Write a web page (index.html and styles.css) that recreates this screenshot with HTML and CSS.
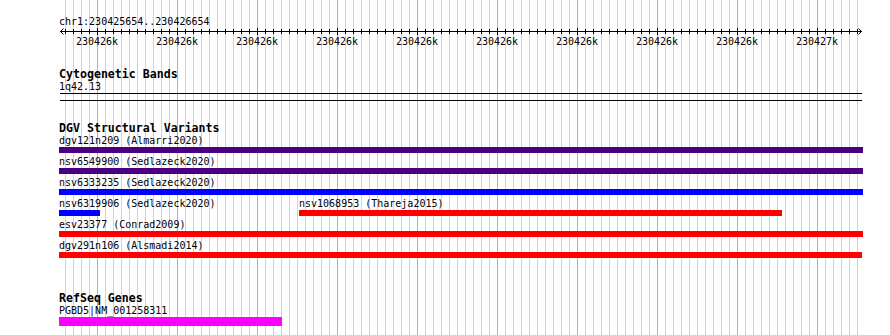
FILE: index.html
```html
<!doctype html>
<html lang="en-us">
  <head>
    <meta charset="utf-8">
    <meta name="viewport" content="width=device-width, initial-scale=1.0">
    <title>chr1:230425654..230426654</title>
    <link rel="stylesheet" href="styles.css">
  </head>
  <body>
    <div class="browser">
      <div class="panel">
        <div class="ruler">
          <div class="landmark">chr1:230425654..230426654</div>
          <svg class="axis" width="804" height="8" viewBox="0 0 804 8" shape-rendering="crispEdges">
            <defs>
              <pattern id="minor-tick" x="6" y="0" width="8" height="8" patternUnits="userSpaceOnUse">
                <rect x="0" y="1" width="1" height="5"/>
              </pattern>
              <pattern id="major-tick" x="38" y="0" width="80" height="8" patternUnits="userSpaceOnUse">
                <rect x="0" y="0" width="1" height="7"/>
              </pattern>
            </defs>
            <rect x="6" y="0" width="793" height="8" fill="url(#minor-tick)"/>
            <rect x="38" y="0" width="721" height="8" fill="url(#major-tick)"/>
            <rect x="1" y="3" width="802" height="1"/>
            <path d="M4.5 0.5 L1.5 3.5 L4.5 6.5 M799.5 0.5 L802.5 3.5 L799.5 6.5" fill="none" stroke="#000" stroke-width="1" shape-rendering="auto"/>
          </svg>
          <div class="ticks">
            <span>230426k</span>
            <span>230426k</span>
            <span>230426k</span>
            <span>230426k</span>
            <span>230426k</span>
            <span>230426k</span>
            <span>230426k</span>
            <span>230426k</span>
            <span>230426k</span>
            <span>230427k</span>
          </div>
        </div>

        <section class="track cytobands">
          <div class="track-title">Cytogenetic Bands</div>
          <div class="name">1q42.13</div>
          <div class="band"></div>
        </section>

        <section class="track dgv">
          <div class="track-title">DGV Structural Variants</div>
          <div class="row">
            <div class="feature" style="margin-left:0;width:804px">
              <div class="name">dgv121n209 (Almarri2020)</div>
              <div class="bar indigo"></div>
            </div>
          </div>
          <div class="row">
            <div class="feature" style="margin-left:0;width:804px">
              <div class="name">nsv6549900 (Sedlazeck2020)</div>
              <div class="bar indigo"></div>
            </div>
          </div>
          <div class="row">
            <div class="feature" style="margin-left:0;width:804px">
              <div class="name">nsv6333235 (Sedlazeck2020)</div>
              <div class="bar blue"></div>
            </div>
          </div>
          <div class="row">
            <div class="feature" style="margin-left:0;width:41px">
              <div class="name">nsv6319906 (Sedlazeck2020)</div>
              <div class="bar blue"></div>
            </div>
            <div class="feature" style="margin-left:240px;width:483px">
              <div class="name">nsv1068953 (Thareja2015)</div>
              <div class="bar red"></div>
            </div>
          </div>
          <div class="row">
            <div class="feature" style="margin-left:0;width:804px">
              <div class="name">esv23377 (Conrad2009)</div>
              <div class="bar red"></div>
            </div>
          </div>
          <div class="row">
            <div class="feature" style="margin-left:0;width:803px">
              <div class="name">dgv291n106 (Alsmadi2014)</div>
              <div class="bar red"></div>
            </div>
          </div>
        </section>

        <section class="track refseq">
          <div class="track-title">RefSeq Genes</div>
          <div class="row">
            <div class="feature" style="margin-left:0;width:223px">
              <div class="name">PGBD5|NM_001258311</div>
              <div class="bar gene"></div>
            </div>
          </div>
        </section>
      </div>
    </div>
  </body>
</html>
```

FILE: styles.css
```css
* {
  box-sizing: border-box;
}

body {
  margin: 0;
  background: #fff;
}

/* the grid box spans the first to the last 10bp line (x 65..857) */
.browser {
  width: 793px;
  height: 335px;
  margin-left: 65px;
  padding-top: 16px;

  font-family: "DejaVu Sans Mono", monospace;
  font-size: 10px;
  line-height: 12px;
  color: #000;

  background-color: #fff;
  background-image:
    linear-gradient(90deg, #7cc2ee 0 1px, rgba(124, 194, 238, 0) 1px),
    linear-gradient(90deg, #a0e6ee 0 1px, rgba(160, 230, 238, 0) 1px);
  background-position: 32px 0, 0 0;
  background-size: 80px 100%, 8px 100%;
  background-repeat: repeat-x;
}

/* tracks start at x 59 */
.panel {
  width: 804px;
  margin-left: -6px;
}

.axis {
  display: block;
}

.ticks {
  display: flex;
  margin-left: -2px;
}

.ticks span {
  flex: none;
  width: 80px;
  text-align: center;
}

.track-title {
  font-weight: bold;
  font-size: 11.6px;
  line-height: 13px;
}

.name {
  white-space: nowrap;
}

.cytobands {
  margin-top: 20px;
}

.band {
  width: 802px;
  height: 8px;
  margin-left: 1px;
  border-top: 1px solid #000;
  border-bottom: 1px solid #000;
}

.dgv {
  margin-top: 21px;
}

.refseq {
  margin-top: 34px;
}

.row {
  display: grid;
  margin-bottom: 3px;
}

.feature {
  grid-area: 1 / 1;
}

.bar {
  height: 6px;
}

.bar.indigo {
  background: #4b0082;
}
.bar.blue {
  background: #0000ff;
}
.bar.red {
  background: #ff0000;
}
.bar.gene {
  height: 9px;
  background: #ff00ff;
}
```
